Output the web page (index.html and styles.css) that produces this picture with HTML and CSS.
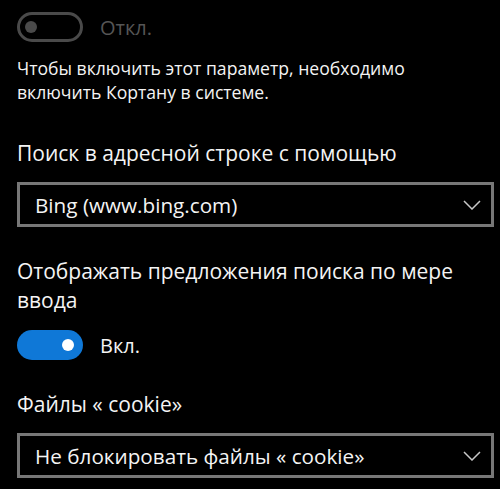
FILE: index.html
```html
<!DOCTYPE html>
<html lang="ru">
<head>
    <meta charset="UTF-8">
    <meta name="viewport" content="width=device-width, initial-scale=1.0">
    <title>Параметры</title>
    <link rel="stylesheet" href="styles.css">
</head>
<body>
    <div class="settings">
        <div class="toggle-row">
            <span class="toggle toggle--off"><span class="toggle__knob"></span></span>
            <span class="toggle__label toggle__label--off">Откл.</span>
        </div>

        <p class="note">Чтобы включить этот параметр, необходимо включить Кортану в системе.</p>

        <div class="field field--first">
            <div class="field__title">Поиск в адресной строке с помощью</div>
            <div class="select">
                <span class="select__value">Bing (www.bing.com)</span>
                <svg class="select__arrow" width="18" height="10" viewBox="0 0 18 10">
                    <path d="M1 1 L9 9 L17 1" fill="none" stroke="#c8c8c8" stroke-width="1.5"/>
                </svg>
            </div>
        </div>

        <div class="field">
            <div class="field__title">Отображать предложения поиска по мере ввода</div>
            <div class="toggle-row toggle-row--field">
                <span class="toggle toggle--on"><span class="toggle__knob"></span></span>
                <span class="toggle__label">Вкл.</span>
            </div>
        </div>

        <div class="field">
            <div class="field__title">Файлы « cookie»</div>
            <div class="select">
                <span class="select__value">Не блокировать файлы « cookie»</span>
                <svg class="select__arrow" width="18" height="10" viewBox="0 0 18 10">
                    <path d="M1 1 L9 9 L17 1" fill="none" stroke="#c8c8c8" stroke-width="1.5"/>
                </svg>
            </div>
        </div>
    </div>
</body>
</html>
```

FILE: styles.css
```css
body {
    margin: 0;
    background: #000;
    color: #f4f4f4;
    font-family: 'Open Sans', 'Noto Sans', sans-serif;
}

.settings {
    padding: 12px 6px 0 17px;
}

.toggle-row {
    display: flex;
    align-items: center;
    gap: 17px;
    height: 30px;
}

.toggle {
    display: flex;
    align-items: center;
    box-sizing: border-box;
    width: 66px;
    height: 30px;
    border-radius: 15px;
    padding: 0 5px;
}

.toggle--off {
    border: 3px solid #4a4a4a;
}

.toggle--on {
    background: #0f78d7;
    justify-content: flex-end;
    padding: 0 9px;
}

.toggle__knob {
    width: 12px;
    height: 12px;
    border-radius: 50%;
    background: #4a4a4a;
}

.toggle--on .toggle__knob {
    background: #fff;
}

.toggle__label {
    font-size: 20px;
    color: #f4f4f4;
}

.toggle__label--off {
    color: #555;
}

.note {
    margin: 14px 0 0;
    font-size: 17.6px;
    line-height: 24px;
    width: 440px;
}

.field {
    margin-top: 30px;
}

.field--first {
    margin-top: 35px;
}

.field__title {
    font-size: 21px;
    line-height: 29px;
}

.select {
    display: flex;
    align-items: center;
    justify-content: space-between;
    box-sizing: border-box;
    height: 45px;
    margin-top: 14px;
    border: 3px solid #777;
    padding: 0 10px 0 15px;
}

.select__value {
    font-size: 20.7px;
}

.toggle-row--field {
    margin-top: 15px;
}
```
